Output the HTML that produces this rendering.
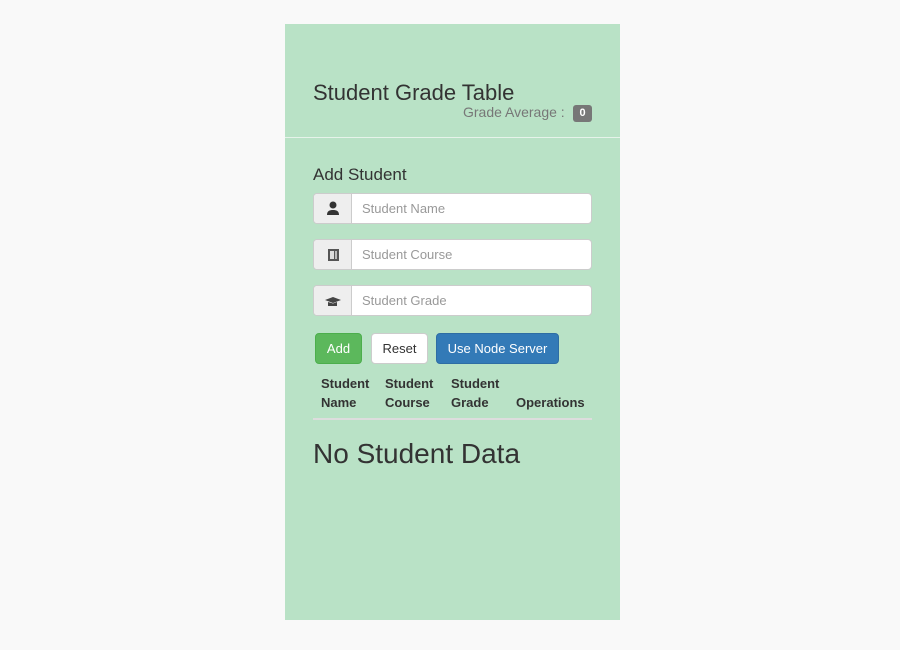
<!DOCTYPE html>
<html><head><style>
body{margin:0;background:#f9f9f9;width:900px;height:650px;position:relative;font-family:"Liberation Sans",sans-serif;color:#333;overflow:hidden}
.p{position:absolute;left:285px;top:24px;width:335px;height:596px;background:#b9e2c6}
.a{position:absolute;white-space:nowrap}
.ig{position:absolute;left:313px;width:279px;height:31px;background:#fff;border:1px solid #ccc;border-radius:4px;box-sizing:border-box}
.ig .ad{position:absolute;left:0;top:0;width:37px;height:29px;background:#eee;border-right:1px solid #ccc;border-radius:3px 0 0 3px}
.ig .ph{position:absolute;left:48px;top:7px;font-size:13px;color:#999}
.btn{position:absolute;top:333px;height:31px;border-radius:4px;font-size:13px;line-height:29px;text-align:center;box-sizing:border-box}
.th{position:absolute;font-size:13px;font-weight:bold;line-height:19px}
</style></head><body>
<div class="p"></div>
<div class="a" style="left:313px;top:80px;font-size:22px">Student Grade Table</div>
<div class="a" style="left:463px;top:104px;font-size:14px;color:#777">Grade Average :</div>
<div class="a" style="left:573px;top:105px;width:19px;height:17px;background:#777;border-radius:3px;color:#fff;font-size:11px;font-weight:bold;text-align:center;line-height:17px">0</div>
<div class="a" style="left:285px;top:137px;width:335px;height:1px;background:#e6f3ea"></div>
<div class="a" style="left:313px;top:165px;font-size:17px">Add Student</div>
<div class="ig" style="top:193px"><div class="ad"><svg width="37" height="29" viewBox="0 0 37 29"><circle cx="19" cy="11" r="3.5" fill="#333"/><path d="M13 21c0-4 2.5-5 6-5s6 1 6 5z" fill="#333"/></svg></div><div class="ph">Student Name</div></div>
<div class="ig" style="top:239px"><div class="ad"><svg width="37" height="29" viewBox="0 0 37 29"><rect x="14" y="9" width="11" height="12" fill="#555"/><rect x="16" y="11" width="4" height="8" fill="#ddd"/><rect x="21" y="11" width="2" height="8" fill="#bbb"/></svg></div><div class="ph">Student Course</div></div>
<div class="ig" style="top:285px"><div class="ad"><svg width="37" height="29" viewBox="0 0 37 29"><path d="M11 14l8-3 8 3-8 3z" fill="#444"/><path d="M14 16v4h9v-4l-4 1.5z" fill="#444"/></svg></div><div class="ph">Student Grade</div></div>
<div class="btn" style="left:315px;width:47px;background:#5cb85c;color:#fff;border:1px solid #4cae4c">Add</div>
<div class="btn" style="left:371px;width:57px;background:#fff;color:#333;border:1px solid #ccc">Reset</div>
<div class="btn" style="left:436px;width:123px;background:#337ab7;color:#fff;border:1px solid #2e6da4">Use Node Server</div>
<div class="th" style="left:321px;top:374px">Student<br>Name</div>
<div class="th" style="left:385px;top:374px">Student<br>Course</div>
<div class="th" style="left:451px;top:374px">Student<br>Grade</div>
<div class="th" style="left:516px;top:393px">Operations</div>
<div class="a" style="left:313px;top:418px;width:279px;height:2px;background:#ddd"></div>
<div class="a" style="left:313px;top:438px;font-size:28px">No Student Data</div>
</body></html>
